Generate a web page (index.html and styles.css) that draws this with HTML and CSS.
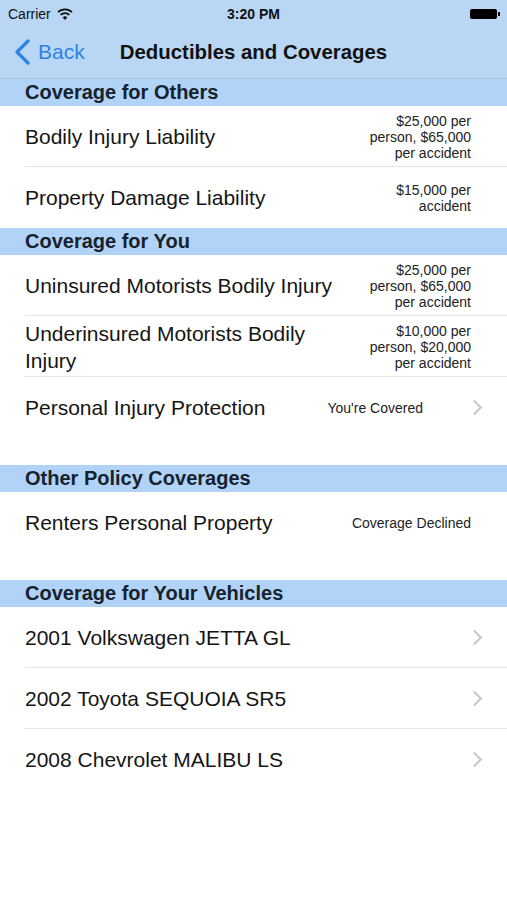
FILE: index.html
```html
<!DOCTYPE html>
<html lang="en">
<head>
	<meta charset="UTF-8">
	<title>Deductibles and Coverages</title>
	<link rel="stylesheet" href="styles.css">
</head>
<body>
<div class="top">
    <div class="status">
        <div class="carrier">Carrier
            <svg class="wifi" width="16" height="12" viewBox="0 0 16 12">
                <path d="M1 4.2 A10 10 0 0 1 15 4.2" fill="none" stroke="#111" stroke-width="1.8"/>
                <path d="M3.6 6.8 A6.4 6.4 0 0 1 12.4 6.8" fill="none" stroke="#111" stroke-width="1.8"/>
                <path d="M6.2 9.4 A2.8 2.8 0 0 1 9.8 9.4 L8 11.4 Z" fill="#111" stroke="#111" stroke-width="1"/>
            </svg>
        </div>
        <div class="time">3:20 PM</div>
        <div class="battery"><span class="cell"></span><span class="nub"></span></div>
    </div>
    <div class="nav">
        <a class="back" href="javascript:void(0);">
            <svg width="17" height="26" viewBox="0 0 17 26"><path d="M14 2 L3 13 L14 24" fill="none" stroke="#2d84e4" stroke-width="3.2" stroke-linecap="round" stroke-linejoin="round"/></svg>
            <span>Back</span>
        </a>
        <h1 class="title">Deductibles and Coverages</h1>
    </div>
</div>

<div class="section">Coverage for Others</div>
<ul class="list">
    <li class="row"><span class="label">Bodily Injury Liability</span><span class="value">$25,000 per<br>person, $65,000<br>per accident</span></li>
    <li class="row"><span class="label">Property Damage Liability</span><span class="value">$15,000 per<br>accident</span></li>
</ul>

<div class="section">Coverage for You</div>
<ul class="list">
    <li class="row"><span class="label">Uninsured Motorists Bodily Injury</span><span class="value">$25,000 per<br>person, $65,000<br>per accident</span></li>
    <li class="row"><span class="label">Underinsured Motorists Bodily<br>Injury</span><span class="value">$10,000 per<br>person, $20,000<br>per accident</span></li>
    <li class="row more"><span class="label">Personal Injury Protection</span><span class="value">You're Covered</span><i class="chev"></i></li>
</ul>
<div class="gap"></div>

<div class="section">Other Policy Coverages</div>
<ul class="list">
    <li class="row"><span class="label">Renters Personal Property</span><span class="value">Coverage Declined</span></li>
</ul>
<div class="gap"></div>

<div class="section">Coverage for Your Vehicles</div>
<ul class="list">
    <li class="row more"><span class="label">2001 Volkswagen JETTA GL</span><i class="chev"></i></li>
    <li class="row more"><span class="label">2002 Toyota SEQUOIA SR5</span><i class="chev"></i></li>
    <li class="row more"><span class="label">2008 Chevrolet MALIBU LS</span><i class="chev"></i></li>
</ul>
</body>
</html>
```

FILE: styles.css
```css
body,html{
    padding: 0;
    margin: 0;
    background: #ffffff;
    color: #111111;
    font-family: "Liberation Sans", Arial, sans-serif;
}
.top{
    background: #b9d7f4;
    border-bottom: 1px solid #a9c6e4;
    height: 78px;
}
.status{
    height: 27px;
    display: flex;
    align-items: center;
    justify-content: space-between;
    padding: 0 7px 0 8px;
    font-size: 14px;
    position: relative;
}
.carrier{
    display: flex;
    align-items: center;
    gap: 6px;
    color: #111;
}
.time{
    position: absolute;
    left: 0;
    right: 0;
    text-align: center;
    font-weight: bold;
    font-size: 14px;
}
.battery{
    display: flex;
    align-items: center;
}
.cell{
    display: block;
    width: 27px;
    height: 10px;
    background: #000;
    border-radius: 2px;
}
.nub{
    display: block;
    width: 2px;
    height: 4px;
    background: #000;
    margin-left: 1px;
}
.nav{
    height: 51px;
    position: relative;
    display: flex;
    align-items: center;
    justify-content: center;
}
.back{
    position: absolute;
    left: 14px;
    top: 12px;
    display: flex;
    align-items: center;
    gap: 7px;
    color: #2d84e4;
    text-decoration: none;
    font-size: 21px;
}
.title{
    margin: 0;
    font-size: 20.4px;
    font-weight: bold;
    color: #111;
}
.section{
    background: #b1d3f7;
    height: 27px;
    line-height: 27px;
    padding-left: 25px;
    font-size: 20px;
    font-weight: bold;
    color: #16222e;
}
.list{
    list-style: none;
    margin: 0;
    padding: 0;
}
.row{
    height: 61px;
    display: flex;
    align-items: center;
    padding: 0 36px 0 25px;
    position: relative;
    box-sizing: border-box;
}
.row:after{
    content: "";
    position: absolute;
    left: 25px;
    right: 0;
    bottom: 0;
    height: 1px;
    background: #e4e4e4;
}
.row:last-child:after{
    display: none;
}
.label{
    flex: 1;
    font-size: 21px;
    line-height: 27px;
    color: #151515;
}
.value{
    font-size: 14px;
    line-height: 16px;
    text-align: right;
    color: #222;
}
.more{
    padding-right: 25px;
}
.more .value{
    margin-right: 46px;
}
.chev{
    width: 9px;
    height: 9px;
    border-top: 2px solid #c7c7cc;
    border-right: 2px solid #c7c7cc;
    transform: rotate(45deg);
    margin-right: 2px;
}
.gap{
    height: 27px;
}
```
